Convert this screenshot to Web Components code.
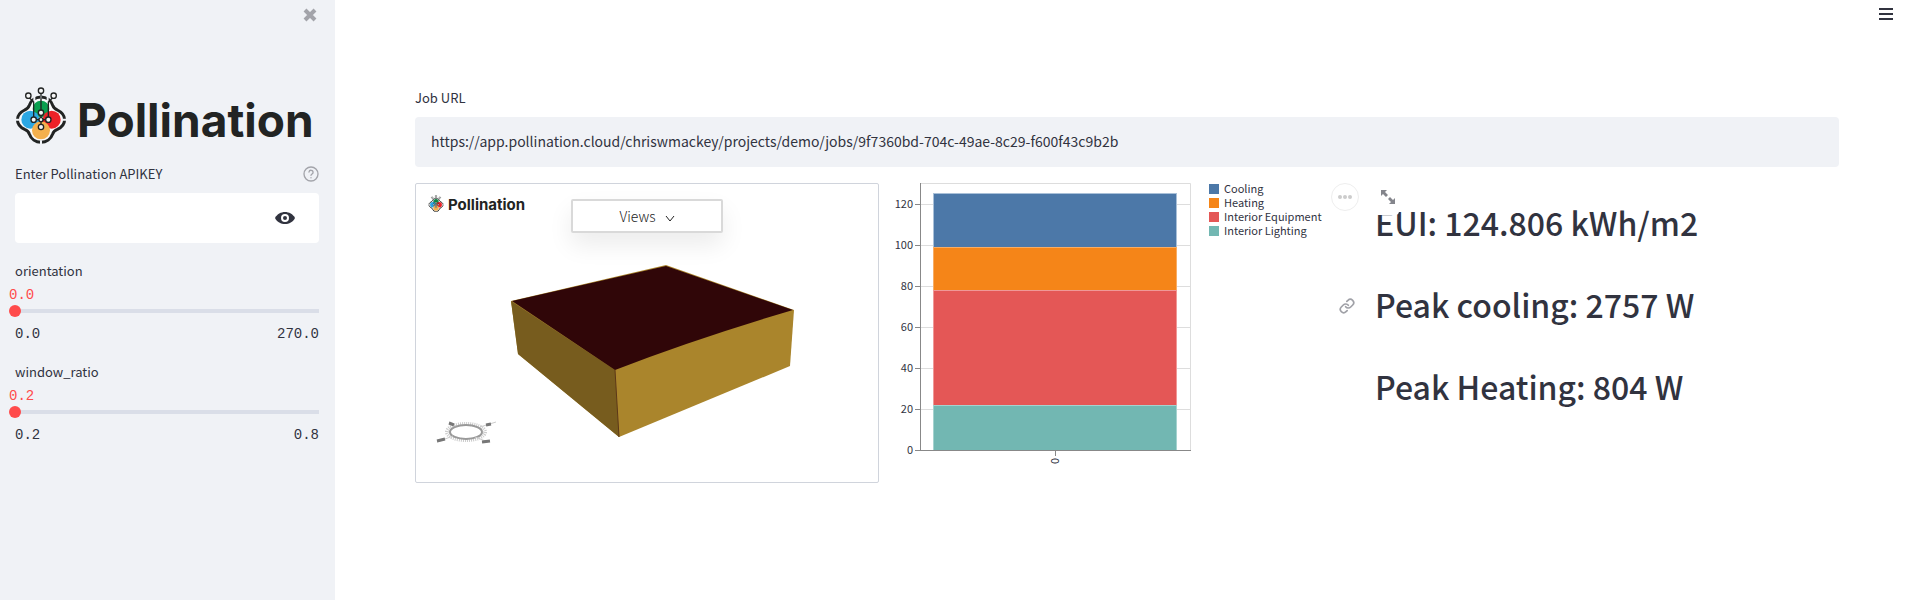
<!DOCTYPE html>
<html lang="en">
<head>
<meta charset="utf-8">
<title>Pollination energy use</title>
<style>
  body {
    margin: 0;
    color: #31333f;
    background: #fff;
    font-family: "Noto Sans CJK SC", "Open Sans", sans-serif;
    font-size: 14px;
    line-height: 20px;
  }
</style>
</head>
<body>
<dashboard-app></dashboard-app>

<script>
const define = (name, html, setup) => {
  const template = document.createElement('template');
  template.innerHTML = html;
  customElements.define(name, class extends HTMLElement {
    constructor() {
      super();
      this.attachShadow({ mode: 'open' }).append(template.content.cloneNode(true));
    }
    connectedCallback() {
      if (setup) setup(this.shadowRoot, this);
    }
  });
};

define('pollination-logo', `
  <style>
    :host { display: flex; align-items: flex-end; gap: var(--logo-gap, 10px); color: #222423; font-family: Inter, sans-serif; font-weight: 700; font-size: var(--logo-size, 46px); line-height: var(--logo-line, 54px); }
    svg { width: var(--logo-mark, 52px); height: var(--logo-height, 60px); flex: none; }
  </style>
  <svg viewBox="14 24 156 180" aria-hidden="true">
    <path d="M57 79A37 37 0 0 1 127 79C130 87 134 91 141 93C170 107 170 137 141 151C133 154 129 158 127 165A37 37 0 0 1 57 165C55 158 51 154 43 151C14 137 14 107 43 93C50 91 54 87 57 79Z" fill="#fafafa" stroke="#222423" stroke-width="9"/>
    <path d="M8 122H30M154 122H176M92 184V206M72 44V68M112 44V68M92 44V60" stroke="var(--logo-back, #f0f2f6)" stroke-width="6"/>
    <circle cx="92" cy="90" r="25" fill="#0ba04f"/>
    <circle cx="60" cy="122" r="27" fill="#2ba7e3"/>
    <circle cx="124" cy="122" r="27" fill="#ed2228"/>
    <circle cx="92" cy="154" r="27" fill="#f4b04d"/>
    <g fill="none" stroke="#222423" stroke-width="4">
      <path d="M92 41V144M57 56L70 69V122H114V69L127 56"/>
      <g fill="#f6f6f6"><circle cx="92" cy="35" r="8"/><circle cx="54" cy="50" r="8"/><circle cx="130" cy="50" r="8"/><circle cx="92" cy="101" r="8"/><circle cx="92" cy="122" r="6"/><circle cx="92" cy="144" r="8"/><circle cx="70" cy="122" r="8"/><circle cx="114" cy="122" r="8"/></g>
    </g>
  </svg>
  <span>Pollination</span>`);

define('text-field', `
  <style>
    :host { display: block; }
    .top { display: flex; justify-content: space-between; align-items: center; height: 20px; margin-bottom: 9px; font-size: 13px; }
    .box { display: flex; align-items: center; height: 50px; border-radius: 4px; background: var(--field-back, #f0f2f6); }
    input { flex: 1; min-width: 0; height: 50px; box-sizing: border-box; border: 0; padding: 0 16px 2px; outline: 0; background: none; color: inherit; font: inherit; }
  </style>
  <div class="top"><label for="field"></label><slot name="help"></slot></div>
  <div class="box"><input id="field"><slot name="action"></slot></div>`,
  (root, host) => {
    root.querySelector('label').textContent = host.getAttribute('label');
    const input = root.querySelector('input');
    input.type = host.getAttribute('type') || 'text';
    input.value = host.getAttribute('value') || '';
  });

define('range-slider', `
  <style>
    :host { display: block; }
    label { display: block; font-size: 13px; line-height: 20px; }
    .mono { font: 14px/20px "Liberation Mono", monospace; }
    output { display: block; margin: 4px 0 0 -6px; color: #ff4b4b; }
    input { -webkit-appearance: none; appearance: none; display: block; width: calc(100% + 12px); height: 12px; margin: 0 -6px; background: linear-gradient(#dadee8, #dadee8) center / calc(100% - 12px) 4px no-repeat; }
    input::-webkit-slider-thumb { -webkit-appearance: none; width: 12px; height: 12px; border-radius: 50%; background: #ff4b4b; }
    .ends { display: flex; justify-content: space-between; margin-top: 7px; }
  </style>
  <label for="range"></label>
  <output class="mono" for="range"></output>
  <input id="range" type="range" step="0.1">
  <div class="ends mono"><span></span><span></span></div>`,
  (root, host) => {
    const input = root.querySelector('input');
    const [low, high] = root.querySelectorAll('span');
    root.querySelector('label').textContent = host.getAttribute('label');
    input.min = low.textContent = host.getAttribute('min');
    input.max = high.textContent = host.getAttribute('max');
    input.value = host.getAttribute('min');
    const show = () => { root.querySelector('output').textContent = Number(input.value).toFixed(1); };
    input.oninput = show;
    show();
  });

define('side-bar', `
  <style>
    :host { display: block; box-sizing: border-box; min-height: 100vh; padding: 6px 16px 6px 15px; background: #f0f2f6; }
    button { border: 0; padding: 0; background: none; display: flex; align-items: center; justify-content: center; color: #a3a4aa; }
    .close { width: 18px; height: 18px; margin-left: auto; }
    pollination-logo { margin-top: 63px; }
    text-field { margin-top: 17px; --field-back: #fff; }
    .eye { width: 36px; height: 32px; margin-right: 16px; color: #31333f; }
    range-slider { margin-top: 18px; }
  </style>
  <button class="close" aria-label="Close sidebar"><svg width="14" height="14" viewBox="0 0 14 14"><path d="M2 2L12 12M12 2L2 12" stroke="currentColor" stroke-width="4"/></svg></button>
  <pollination-logo></pollination-logo>
  <text-field label="Enter Pollination APIKEY" type="password">
    <button slot="help" aria-label="Help"><svg width="16" height="16" viewBox="0 0 24 24" fill="none" stroke="currentColor" stroke-width="2" stroke-linecap="round"><circle cx="12" cy="12" r="10.5"/><path d="M9 9a3 3 0 0 1 6 1c0 2-3 2-3 4M12 17.500v.1"/></svg></button>
    <button slot="action" class="eye" aria-label="Show password"><svg width="20" height="14" viewBox="0 0 20 14"><path d="M0 7C2 3 6 1 10 1S18 3 20 7C18 11 14 13 10 13S2 11 0 7Z" fill="currentColor"/><circle cx="10" cy="7" r="3" fill="currentColor" stroke="#fff" stroke-width="2"/></svg></button>
  </text-field>
  <range-slider label="orientation" min="0.0" max="270.0"></range-slider>
  <range-slider label="window_ratio" min="0.2" max="0.8"></range-slider>`);

define('model-viewer', `
  <style>
    :host { display: grid; box-sizing: border-box; height: 300px; border: 1px solid #d0d4dc; border-radius: 2px; overflow: hidden; }
    .scene, .bar { grid-area: 1 / 1; }
    .scene { width: 100%; height: 298px; }
    .bar { display: grid; grid-template-columns: 1fr auto 1fr; align-items: start; align-self: start; padding: 15px 12px; }
    pollination-logo { --logo-mark: 16px; --logo-height: 18px; --logo-line: 16px; --logo-size: 15px; --logo-gap: 4px; --logo-back: #fff; margin-top: -4px; }
    button { width: 152px; height: 34px; display: flex; align-items: center; justify-content: center; gap: 9px; border: 2px solid #d9d9d9; border-radius: 2px; background: #fff; color: #222; font: inherit; font-weight: 300; box-shadow: 0 12px 24px rgba(0,0,0,.08); }
    button svg { margin-top: 4px; }
  </style>
  <svg class="scene" viewBox="1 1 462 298" role="img" aria-label="Building model">
    <path d="M96 118L251 82L379 127L375 183L204 254L103 171Z" fill="#aa852c"/>
    <path d="M96 118L200 187L204 254L103 171Z" fill="#775c1e"/>
    <path d="M97 118L251 83L378 127Q280 156 200 187Z" fill="#300608"/>
    <path d="M200 187L204 254" stroke="#5c3818"/>
    <g fill="none">
      <ellipse cx="51" cy="249" rx="19" ry="8" stroke="#ccc" stroke-width="4" stroke-dasharray="1 1"/>
      <ellipse cx="51" cy="249" rx="16" ry="7" stroke="#999" stroke-width="2"/>
      <path d="M34 239L41 243M65 244L81 239M38 253L22 259M60 254L73 259" stroke="#ccc"/>
      <path d="M34 240L39 242M71 242L76 241M22 258L30 256M67 259L75 258" stroke="#777" stroke-width="3"/>
    </g>
  </svg>
  <div class="bar">
    <pollination-logo></pollination-logo>
    <button>Views <svg width="10" height="10" viewBox="0 0 10 10"><path d="M1 3L5 8L9 3" fill="none" stroke="#222"/></svg></button>
  </div>`);

define('energy-chart', `
  <style>
    :host { display: block; position: relative; }
    svg { display: block; overflow: visible; }
    text { fill: #31333f; font-size: 11px; line-height: 12px; }
    button { position: absolute; top: 0; right: 0; width: 28px; height: 28px; border: 1px solid #eee; border-radius: 50%; background: #fff; padding: 0; display: flex; align-items: center; justify-content: center; }
  </style>
  <svg width="440" height="300" viewBox="0 0 440 300" role="img" aria-label="Energy use by category">
    <g class="axis"></g>
    <g stroke-width="1">
      <rect x="38.500" y="10.500" width="243" height="54" fill="#4c78a8" stroke="#a9c0d8"/>
      <rect x="38.500" y="64.500" width="243" height="43" fill="#f58518" stroke="#f8ad64"/>
      <rect x="38.500" y="107.500" width="243" height="115" fill="#e45756" stroke="#f09897"/>
      <rect x="38.500" y="222.500" width="243" height="45" fill="#72b7b2" stroke="#a5d2cf"/>
    </g>
    <path d="M25.500 0V267.500M20 267.500H296M160.500 267V273" fill="none" stroke="#888"/>
    <text transform="translate(164 278) rotate(-90)" text-anchor="middle">0</text>
    <g class="legend"></g>
  </svg>
  <button aria-label="Chart actions"><svg width="14" height="4" viewBox="0 0 14 4" fill="#ccc"><circle cx="2" cy="2" r="2"/><circle cx="7" cy="2" r="2"/><circle cx="12" cy="2" r="2"/></svg></button>`,
  root => {
    let axis = '<path d="M25 .5H295.5V267" fill="none" stroke="#ddd"/>';
    for (let value = 0; value <= 120; value += 20) {
      const y = 267 - Math.round(value * 267 / 130);
      if (value) axis += `<path d="M26 ${y + .5}H295" stroke="#ddd"/><path d="M20 ${y + .5}H25" stroke="#888"/>`;
      axis += `<text x="18" y="${y + 4}" text-anchor="end">${value}</text>`;
    }
    root.querySelector('.axis').innerHTML = axis;
    root.querySelector('.legend').innerHTML = [
      ['Cooling', '#4c78a8'], ['Heating', '#f58518'],
      ['Interior Equipment', '#e45756'], ['Interior Lighting', '#72b7b2']
    ].map(([name, fill], i) => `<rect x="314" y="${1 + i * 14}" width="10" height="10" fill="${fill}"/><text x="329" y="${10 + i * 14}">${name}</text>`).join('');
  });

define('result-list', `
  <style>
    :host { display: block; position: relative; padding-top: 15px; }
    h2 { position: relative; margin: 0 0 34px; font-size: 32px; line-height: 48px; font-weight: 500; white-space: nowrap; }
    a { position: absolute; left: -36px; top: 18px; width: 16px; height: 16px; color: #a0a1a7; line-height: 0; }
    button { position: absolute; left: -1px; top: 0; width: 25px; height: 32px; padding: 0 0 0 2px; border: 0; border-radius: 4px; background: #fff; color: #84858c; display: flex; align-items: center; justify-content: center; padding-bottom: 4px; box-sizing: border-box; }
  </style>
  <h2>EUI: 124.806 kWh/m2</h2>
  <h2 id="peak-cooling"><a href="#peak-cooling" aria-label="Link to Peak cooling"><svg width="16" height="16" viewBox="0 0 24 24" fill="none" stroke="currentColor" stroke-width="2.500" stroke-linecap="round"><path d="M10 13a5 5 0 0 0 7.540.54l3-3a5 5 0 0 0-7.070-7.070l-1.720 1.710M14 11a5 5 0 0 0-7.540-.54l-3 3a5 5 0 0 0 7.070 7.070l1.710-1.710"/></svg></a>Peak cooling: 2757 W</h2>
  <h2>Peak Heating: 804 W</h2>
  <button aria-label="View fullscreen"><svg width="14" height="14" viewBox="0 0 14 14"><path d="M0 0H6L4 2L7 5L5 7L2 4L0 6ZM14 14H8L10 12L7 9L9 7L12 10L14 8Z" fill="currentColor"/></svg></button>`);

define('dashboard-app', `
  <style>
    :host { display: grid; grid-template-columns: 335px minmax(0, 1fr); min-height: 100vh; }
    main { padding: 0 73px 80px 80px; }
    header { display: flex; justify-content: flex-end; align-items: center; height: 28px; margin: 0 -54px 60px 0; }
    .menu { width: 14px; height: 14px; padding: 0; border: 0; background: none; display: flex; }
    .columns { display: grid; grid-template-columns: repeat(3, minmax(0, 1fr)); gap: 16px; margin-top: 16px; }
  </style>
  <side-bar></side-bar>
  <main>
    <header><button class="menu" aria-label="Menu"><svg width="14" height="14" viewBox="0 0 14 14"><path d="M0 2H14M0 7H14M0 12H14" stroke="#31333f" stroke-width="2"/></svg></button></header>
    <text-field label="Job URL" value="https://app.pollination.cloud/chriswmackey/projects/demo/jobs/9f7360bd-704c-49ae-8c29-f600f43c9b2b"></text-field>
    <div class="columns">
      <model-viewer></model-viewer>
      <energy-chart></energy-chart>
      <result-list></result-list>
    </div>
  </main>`);
</script>
</body>
</html>
